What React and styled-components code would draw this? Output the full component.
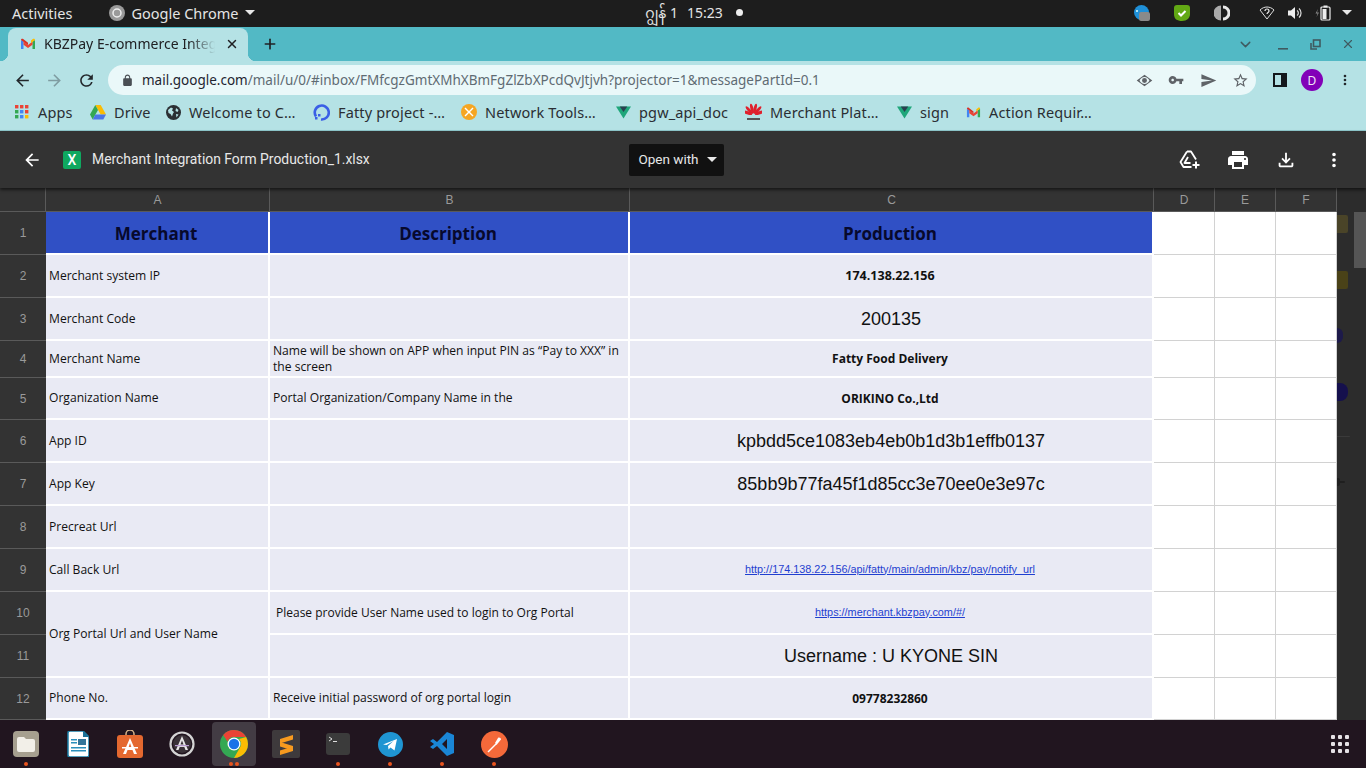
import React from 'react'
import styled, { createGlobalStyle } from 'styled-components'
import { ChevronDown, Plus, X } from 'lucide-react'

const GlobalStyle = createGlobalStyle`
  html, body { margin: 0; padding: 0; background: #333; overflow: hidden; }
  body { font-family: "Noto Sans", sans-serif; }
`

const Page = styled.div`
  width: 1366px;
  height: 768px;
  display: flex;
  flex-direction: column;
  overflow: hidden;
`

/* ---------- gnome top bar ---------- */
const TopBar = styled.div`
  height: 27px;
  flex: none;
  box-sizing: border-box;
  background: #1d1d1d;
  color: #e4e4e4;
  font-size: 14.5px;
  line-height: 20px;
  display: grid;
  grid-template-columns: 1fr auto 1fr;
  grid-template-rows: 25px;
  align-items: center;
  padding: 0 0 2px 12px;
`
const TopLeft = styled.div`
  display: flex;
  align-items: center;
`
const AppName = styled.div`
  margin-left: 37px;
  display: flex;
  align-items: center;
  gap: 6px;
`
const Caret = styled.span`
  width: 0;
  height: 0;
  margin-left: 1px;
  border-left: 5px solid transparent;
  border-right: 5px solid transparent;
  border-top: 5px solid #e8e8e8;
`
const Clock = styled.div`
  display: flex;
  align-items: center;
  gap: 9px;
  margin-left: 10px;
  font-size: 14px;
  font-family: "Noto Sans", "Noto Sans Myanmar", sans-serif;
`
const Dot = styled.span`
  width: 7px;
  height: 7px;
  border-radius: 50%;
  background: #eee;
  margin-left: 4px;
`
const Tray = styled.div`
  display: flex;
  justify-content: flex-end;
  align-items: center;
  padding-right: 12px;
`
const TraySlot = styled.div`
  width: ${p => p.$w}px;
  display: flex;
  justify-content: center;
  align-items: center;
`

/* ---------- chrome ---------- */
const TabStrip = styled.div`
  height: 34px;
  flex: none;
  background: #52b9c5;
  display: flex;
  align-items: flex-end;
  padding-left: 8px;
  color: #202124;
`
const Tab = styled.div`
  position: relative;
  width: 240px;
  height: 33px;
  background: #b5e2e5;
  border-radius: 8px 8px 0 0;
  display: flex;
  align-items: center;
  padding: 0 9px 2px 12px;
  box-sizing: border-box;
  gap: 8px;
  font-size: 14px;
  &::before, &::after {
    content: "";
    position: absolute;
    bottom: 0;
    width: 8px;
    height: 8px;
  }
  &::before { left: -8px; background: radial-gradient(circle at 0 0, transparent 8px, #b5e2e5 8.5px); }
  &::after { right: -8px; background: radial-gradient(circle at 100% 0, transparent 8px, #b5e2e5 8.5px); }
`
const TabTitle = styled.div`
  flex: 1;
  white-space: nowrap;
  overflow: hidden;
  -webkit-mask-image: linear-gradient(90deg, #000 84%, transparent 99%);
  mask-image: linear-gradient(90deg, #000 84%, transparent 99%);
`
const NewTab = styled.div`
  margin: 0 0 9px 14px;
  display: flex;
`
const WindowControls = styled.div`
  margin-left: auto;
  height: 34px;
  padding-right: 2px;
  display: flex;
  align-items: center;
  color: #3f5a60;
`
const WinButton = styled.div`
  width: ${p => p.$w}px;
  display: flex;
  justify-content: center;
`
const Toolbar = styled.div`
  height: 34px;
  flex: none;
  background: #b5e2e5;
  display: flex;
  align-items: center;
  padding-top: 4px;
  box-sizing: border-box;
`
const NavButton = styled.div`
  width: 32px;
  display: flex;
  justify-content: center;
  &:first-child { margin-left: 6px; }
`
const Omnibox = styled.div`
  width: 1148px;
  height: 30px;
  margin-left: 6px;
  border-radius: 15px;
  background: #eaf8f9;
  display: flex;
  align-items: center;
  padding-left: 13px;
  box-sizing: border-box;
  font-size: 13.5px;
  color: #5f6b73;
  white-space: nowrap;
`
const Host = styled.span`
  color: #1f2430;
`
const Url = styled.div`
  margin-left: 8px;
  flex: 1;
  padding-bottom: 1px;
`
const OmniIcon = styled.div`
  width: 32px;
  display: flex;
  justify-content: center;
`
const RightTools = styled.div`
  display: flex;
  align-items: center;
  margin-left: 9px;
`
const ToolSlot = styled.div`
  width: ${p => p.$w}px;
  display: flex;
  justify-content: center;
`
const Avatar = styled.div`
  width: 22px;
  height: 22px;
  border-radius: 50%;
  background: #8200b8;
  color: #f2e6f7;
  font-size: 12px;
  display: flex;
  align-items: center;
  justify-content: center;
`
const Bookmarks = styled.div`
  height: 35px;
  flex: none;
  background: #b5e2e5;
  border-bottom: 1px solid #8fc9cd;
  box-sizing: content-box;
  display: flex;
  align-items: center;
  padding-left: 15px;
  font-size: 14.5px;
  letter-spacing: 0.15px;
  color: #2a2e33;
`
const Bookmark = styled.div`
  width: ${p => p.$w}px;
  flex: none;
  display: flex;
  align-items: center;
  gap: 8px;
  white-space: nowrap;
  line-height: 18px;
  margin-bottom: 1px;
`

/* ---------- drive viewer ---------- */
const ViewerBar = styled.div`
  height: 57px;
  flex: none;
  background: #333;
  color: #e8e8e8;
  display: grid;
  grid-template-columns: 1fr auto 1fr;
  align-items: center;
  box-shadow: 0 2px 3px rgba(0, 0, 0, 0.55);
  position: relative;
  z-index: 1;
`
const ViewerLeft = styled.div`
  display: flex;
  align-items: center;
  padding-left: 22px;
`
const FileBadge = styled.div`
  width: 18px;
  height: 18px;
  margin-left: 21px;
  margin-right: 11px;
  border-radius: 2px;
  background: #0fa860;
  color: #fff;
  font: 500 14px "Roboto", sans-serif;
  display: flex;
  align-items: center;
  justify-content: center;
`
const FileName = styled.div`
  font: 13.9px "Roboto", sans-serif;
  margin-bottom: 1px;
`
const OpenWith = styled.div`
  width: 95px;
  height: 32px;
  margin-right: 14px;
  padding: 0 0 1px 3px;
  box-sizing: border-box;
  background: #111;
  border-radius: 2px;
  font: 13.5px "Roboto", sans-serif;
  display: flex;
  align-items: center;
  justify-content: center;
  gap: 7px;
`
const ViewerRight = styled.div`
  display: flex;
  justify-content: flex-end;
  align-items: center;
  padding-right: 8px;
`
const ViewerAction = styled.div`
  width: 48px;
  display: flex;
  justify-content: center;
`

const SheetArea = styled.div`
  flex: 1;
  min-height: 0;
  display: flex;
  background: #2c2c2c;
`
const Sheet = styled.div`
  width: 1337px;
  flex: none;
  display: grid;
  grid-template-columns: 46px 224px 360px 524px 61px 61px 61px;
  grid-template-rows: 24px 43px 43px 43px 37px 42px 43px 43px 43px 43px 43px 43px 42px;
`
const Corner = styled.div`
  background: #333;
  border-right: 1px solid #5a5a5a;
  border-bottom: 1px solid #5a5a5a;
`
const ColHead = styled.div`
  background: #333;
  color: #9a9a9a;
  font: 12px "Liberation Sans", sans-serif;
  display: flex;
  align-items: center;
  justify-content: center;
  border-right: 1px solid #5a5a5a;
  border-bottom: 1px solid #5a5a5a;
`
const RowHead = styled.div`
  background: #333;
  color: #9a9a9a;
  font: 12px "Liberation Sans", sans-serif;
  display: flex;
  align-items: center;
  justify-content: center;
  border-bottom: 1px solid #5a5a5a;
`
const Cell = styled.div`
  background: #e9eaf4;
  border-right: 2px solid #fff;
  border-bottom: 2px solid #fff;
  box-sizing: border-box;
  display: flex;
  align-items: center;
  padding: 0 3px;
  color: #111;
  font: 12.1px/16px "Open Sans", sans-serif;
  grid-row: ${p => (p.$span ? `span ${p.$span}` : 'auto')};
  ${p => p.$inset && 'padding-left: 6px; font-size: 12px;'}
`
const HeadCell = styled.div`
  background: #3050c5;
  border-right: 2px solid #fff;
  border-bottom: 2px solid #fff;
  box-sizing: border-box;
  display: flex;
  align-items: center;
  justify-content: center;
  padding: 1px 2px 0 0;
  color: #07092c;
  font: bold 17px "Open Sans", sans-serif;
`
const ValueCell = styled(Cell)`
  justify-content: center;
  padding: 0 2px 0 0;
  ${p => p.$kind === 'bold' && 'font: bold 12px "Open Sans", sans-serif;'}
  ${p => p.$kind === 'ip' && 'font: bold 12.5px "Open Sans", sans-serif;'}
  ${p => p.$kind === 'big' && 'font: 18px "Liberation Sans", sans-serif; padding: 2px 0 0 0;'}
  ${p => p.$kind === 'link' && 'font: 10.85px "Liberation Sans", sans-serif; color: #1f3fd0; text-decoration: underline; padding-bottom: 2px;'}
`
const EmptyCell = styled.div`
  background: #fff;
  border-right: 1px solid #d2d2d2;
  border-bottom: 1px solid #d2d2d2;
  box-sizing: border-box;
`
const Gutter = styled.div`
  flex: 1;
  position: relative;
  background: #2c2c2c;
`
const Thumb = styled.div`
  position: absolute;
  top: 24px;
  right: 0;
  width: 12px;
  height: 56px;
  background: #555;
`
/* the page behind the viewer shows through faintly */
const Ghost = styled.div`
  position: absolute;
  left: 0;
  top: ${p => p.$top}px;
  width: ${p => p.$w}px;
  height: ${p => p.$h}px;
  background: ${p => p.$bg};
  border-radius: 0 ${p => p.$r || 2}px ${p => p.$r || 2}px 0;
`

/* ---------- dock ---------- */
const Dock = styled.div`
  height: 48px;
  flex: none;
  background: #21151f;
  display: flex;
  align-items: center;
  position: relative;
`
const DockItem = styled.div`
  position: relative;
  width: 44px;
  height: 44px;
  margin: 0 4px;
  flex: none;
  display: flex;
  align-items: center;
  justify-content: center;
  border-radius: 4px;
  background: ${p => (p.$active ? '#433c44' : 'transparent')};
`
const Pips = styled.div`
  position: absolute;
  left: 0;
  right: 0;
  bottom: 0;
  display: flex;
  justify-content: center;
  gap: 2px;
`
const Pip = styled.span`
  width: 4px;
  height: 4px;
  border-radius: 50%;
  background: #e9541f;
`
const AppGrid = styled.div`
  margin-left: auto;
  margin-right: 17px;
  display: grid;
  grid-template-columns: repeat(3, 4px);
  gap: 3px;
`
const GridDot = styled.span`
  width: 4px;
  height: 4px;
  border-radius: 1px;
  background: #e6e2e6;
`

const Glyph = ({ d, size = 16, color = 'currentColor' }) => (
  <svg width={size} height={size} viewBox="0 0 24 24" fill={color}><path d={d} /></svg>
)

const paths = {
  back: 'M20 11H7.83l5.59-5.59L12 4l-8 8 8 8 1.41-1.41L7.83 13H20v-2z',
  forward: 'M4 11h12.17l-5.59-5.59L12 4l8 8-8 8-1.41-1.41L16.17 13H4v-2z',
  reload: 'M17.65 6.35A7.958 7.958 0 0012 4c-4.42 0-7.99 3.58-7.99 8s3.57 8 7.99 8c3.73 0 6.84-2.55 7.73-6h-2.08A5.99 5.99 0 0112 18c-3.31 0-6-2.69-6-6s2.69-6 6-6c1.66 0 3.14.69 4.22 1.78L13 11h7V4l-2.35 2.35z',
  lock: 'M18 8h-1V6c0-2.76-2.24-5-5-5S7 3.24 7 6v2H6c-1.1 0-2 .9-2 2v10c0 1.1.9 2 2 2h12c1.1 0 2-.9 2-2V10c0-1.1-.9-2-2-2zM9 6c0-1.66 1.34-3 3-3s3 1.34 3 3v2H9V6z',
  key: 'M12.65 10C11.83 7.67 9.61 6 7 6c-3.31 0-6 2.69-6 6s2.69 6 6 6c2.61 0 4.83-1.67 5.65-4H17v4h4v-4h2v-4H12.65zM7 14c-1.1 0-2-.9-2-2s.9-2 2-2 2 .9 2 2-.9 2-2 2z',
  send: 'M2.01 21L23 12 2.01 3 2 10l15 2-15 2z',
  star: 'M22 9.24l-7.19-.62L12 2 9.19 8.63 2 9.24l5.46 4.73L5.82 21 12 17.27 18.18 21l-1.63-7.03L22 9.24zM12 15.4l-3.76 2.27 1-4.28-3.32-2.88 4.38-.38L12 6.1l1.71 4.04 4.38.38-3.32 2.88 1 4.28L12 15.4z',
  print: 'M19 8H5c-1.66 0-3 1.34-3 3v6h4v4h12v-4h4v-6c0-1.66-1.34-3-3-3zm-3 11H8v-5h8v5zm3-7c-.55 0-1-.45-1-1s.45-1 1-1 1 .45 1 1-.45 1-1 1zm-1-9H6v4h12V3z',
  download: 'M18 15v3H6v-3H4v3c0 1.1.9 2 2 2h12c1.1 0 2-.9 2-2v-3h-2zm-1-4l-1.41-1.41L13 12.17V4h-2v8.17L8.41 9.59 7 11l5 5 5-5z',
  dots: 'M12 8a2 2 0 100-4 2 2 0 000 4zm0 2a2 2 0 100 4 2 2 0 000-4zm0 6a2 2 0 100 4 2 2 0 000-4z',
  eye: 'M12 4L1 12l11 8 11-8-11-8zm0 3c3 0 5.500 2 7 5-1.500 3-4 5-7 5s-5.500-2-7-5c1.500-3 4-5 7-5zm0 1.500a3.500 3.500 0 100 7 3.500 3.500 0 000-7z',
}

const GmailIcon = ({ size = 16 }) => (
  <svg width={size} height={size} viewBox="0 0 16 16" fill="none">
    <path d="M1 13V4l2.500 1.500V13z" fill="#4285f4" />
    <path d="M15 13V4l-2.500 1.500V13z" fill="#34a853" />
    <path d="M3.500 5.500v3.200L8 12l4.500-3.300V5.500L8 9z" fill="#ea4335" />
    <path d="M1 4c0-1.200 1.300-1.600 2.200-.9L8 6.800V9L1 4z" fill="#d93025" />
    <path d="M15 4c0-1.200-1.300-1.600-2.200-.9L11 4.500V7l4-3z" fill="#fbbc04" />
  </svg>
)
const AppsIcon = () => (
  <svg width="15" height="14" viewBox="0 0 15 14">
    {[0, 5, 10].flatMap((y, r) => [0, 5, 10].map((x, c) => (
      <rect key={`${r}${c}`} x={x} y={y} width="3.400" height="3.400"
        fill={[['#ea4335', '#ea4335', '#ea4335'], ['#34a853', '#4285f4', '#ea4335'], ['#34a853', '#4285f4', '#fbbc04']][r][c]} />
    )))}
  </svg>
)
const DriveIcon = () => (
  <svg width="16" height="15" viewBox="0 0 16 15">
    <path d="M5.300 0h5.400l5.300 9.500h-5.300z" fill="#fbbc04" />
    <path d="M5.300 0L0 9.500 2.700 14.500 8 5z" fill="#34a853" />
    <path d="M2.700 14.500h10.600L16 9.500H5.400z" fill="#4a76e8" />
  </svg>
)
const GlobeIcon = () => (
  <svg width="15" height="15" viewBox="0 0 15 15">
    <circle cx="7.500" cy="7.500" r="7.500" fill="#2b2f33" />
    <path d="M2 5l3-2.500 2 1-1 2 2 1.500-1 1.500-1 3-1.500-2.500L2.500 8zM10 3l2.500 2-1 2-2-1zM10 9l2.500.5-2 3z" fill="#b5e2e5" />
  </svg>
)
const FattyIcon = () => (
  <svg width="17" height="17" viewBox="0 0 17 17" fill="none">
    <path d="M3 12.500a7 7 0 115 3" stroke="#3b5fe6" strokeWidth="2.600" />
    <rect x="5" y="10" width="2.500" height="2.500" fill="#3b5fe6" />
    <rect x="2" y="13" width="2.500" height="2.500" fill="#3b5fe6" />
  </svg>
)
const NetworkIcon = () => (
  <svg width="16" height="16" viewBox="0 0 16 16">
    <circle cx="8" cy="8" r="8" fill="#f5a623" />
    <path d="M4.500 3.500L8 7l3.500-3.500 1 1L9 8l3.500 3.500-1 1L8 9l-3.500 3.500-1-1L7 8 3.500 4.500z" fill="#fff" />
  </svg>
)
const VIcon = () => (
  <svg width="15" height="13" viewBox="0 0 16 13">
    <path d="M0 0h16L8 13z" fill="#1fa67a" />
    <path d="M4 0h8L8 6z" fill="#2a4050" />
  </svg>
)
const HuaweiIcon = () => (
  <svg width="17" height="18" viewBox="0 0 17 18">
    {[-70, -42, -14, 14, 42, 70].map(a => (
      <ellipse key={a} cx="8.500" cy="5.500" rx="1.500" ry="5" fill="#e0202c" transform={`rotate(${a} 8.500 12)`} />
    ))}
    <rect x="2" y="15" width="13" height="2" fill="#555" />
  </svg>
)
const BlueDisk = () => (
  <svg width="16" height="16" viewBox="0 0 16 16">
    <circle cx="7.500" cy="7.500" r="7.500" fill="#1f90d8" />
    <rect x="5" y="7" width="11" height="9" rx="2" fill="#8a8a8a" />
    <circle cx="3" cy="6" r="1" fill="#dff" />
  </svg>
)
const GreenShield = () => (
  <svg width="16" height="16" viewBox="0 0 16 16">
    <path d="M3 0h10c2 0 3 1 3 3v6c0 4-3 7-8 7-5 0-8-2-8-7V3c0-2 1-3 3-3z" fill="#62a814" />
    <path d="M4.500 8L7 10.500 11.500 6" stroke="#fff" strokeWidth="2" fill="none" />
  </svg>
)
const HalfCircle = () => (
  <svg width="16" height="16" viewBox="0 0 16 16">
    <path d="M7 .5a7.500 7.500 0 000 15z" fill="#aaa" />
    <path d="M9 .5a7.500 7.500 0 010 15v-3a4.500 4.500 0 000-9z" fill="#e8e8e8" />
  </svg>
)
const WifiQ = () => (
  <svg width="16" height="14" viewBox="0 0 16 14" fill="none">
    <path d="M1 4c4-4 10-4 14 0l-7 9z" stroke="#ddd" strokeWidth="1" />
    <path d="M6 5a2 2 0 114 0c0 1.500-2 1.500-2 3" stroke="#eee" strokeWidth="1.200" />
  </svg>
)
const Volume = () => (
  <svg width="15" height="14" viewBox="0 0 15 14" fill="none">
    <path d="M0 4.500h3L7 1v12L3 9.500H0z" fill="#eee" />
    <path d="M9 4.500a3 3 0 010 5M11 2.500a6 6 0 010 9" stroke="#ddd" strokeWidth="1.200" />
  </svg>
)
const Battery = () => (
  <svg width="16" height="16" viewBox="0 0 16 16" fill="none">
    <path d="M3 4L.5 8.500h2L1.500 12 4 7.500H2z" fill="#8a8a8a" />
    <rect x="6" y="2" width="9" height="13" rx="1" stroke="#eee" strokeWidth="1.200" />
    <rect x="8.500" y=".5" width="4" height="2" fill="#eee" />
    <rect x="7.500" y="4" width="4" height="10" fill="#eee" />
  </svg>
)
const SidePanel = () => (
  <svg width="14" height="14" viewBox="0 0 14 14">
    <rect x="1" y="1" width="12" height="12" fill="none" stroke="#14181c" strokeWidth="2" />
    <rect x="8" y="1" width="5" height="12" fill="#14181c" />
  </svg>
)
const RestoreIcon = () => (
  <svg width="11" height="11" viewBox="0 0 11 11" fill="none" stroke="#3f5a60" strokeWidth="1.600">
    <rect x="3.500" y="1" width="6.500" height="6.500" />
    <path d="M1 4v6h6" />
  </svg>
)
const AddDrive = () => (
  <svg width="22" height="20" viewBox="0 0 22 20" fill="none" stroke="#fff" strokeWidth="1.800" strokeLinejoin="round">
    <path d="M8 1.500h4l5 8M8 1.500L1.500 12l3 5h8" />
    <path d="M9 7l-3.500 6h6" />
    <path d="M17 11.500v7M13.500 15h7" strokeWidth="2" />
  </svg>
)

const FilesDock = () => (
  <svg width="26" height="26" viewBox="0 0 26 26">
    <rect width="26" height="26" rx="4" fill="#a69f8f" />
    <path d="M4 8a2 2 0 012-2h5l2 2h7a2 2 0 012 2v9a2 2 0 01-2 2H6a2 2 0 01-2-2z" fill="#f2efe8" />
  </svg>
)
const WriterDock = () => (
  <svg width="22" height="26" viewBox="0 0 22 26">
    <path d="M1 2a2 2 0 012-2h13l6 6v18a2 2 0 01-2 2H3a2 2 0 01-2-2z" fill="#fff" stroke="#1b7fa8" strokeWidth="1.500" />
    <path d="M16 0l6 6h-6z" fill="#1b6f96" />
    <rect x="4" y="8" width="6" height="1.500" fill="#2a8fbc" />
    <rect x="4" y="11" width="6" height="1.500" fill="#2a8fbc" />
    <rect x="11" y="8" width="8" height="6" fill="#33759a" />
    <rect x="4" y="16" width="15" height="1.500" fill="#2a8fbc" />
    <rect x="4" y="19" width="15" height="1.500" fill="#2a8fbc" />
  </svg>
)
const StoreDock = () => (
  <svg width="26" height="28" viewBox="0 0 26 28">
    <path d="M9 6V4a4 4 0 018 0v2" fill="none" stroke="#d8b48a" strokeWidth="1.500" />
    <rect y="5" width="26" height="23" rx="3" fill="#e4682f" />
    <path d="M13 8l-7 16h3l1.500-4h5L17 24h3zM11.500 17.500L13 13l1.500 4.500z" fill="#fff" />
    <rect x="5" y="17" width="16" height="1.500" fill="#fff" />
  </svg>
)
const UpdateDock = () => (
  <svg width="26" height="26" viewBox="0 0 26 26" fill="none">
    <circle cx="13" cy="13" r="11.500" stroke="#d4d4d4" strokeWidth="2.200" />
    <circle cx="13" cy="13" r="9" fill="#3a3238" />
    <path d="M13 5l-6 14h2.500l1.200-3h4.600l1.200 3H19zM11.500 13.500L13 9.500l1.500 4z" fill="#e8e8e8" />
    <rect x="6" y="14" width="14" height="1.200" fill="#b79ad0" />
  </svg>
)
const ChromeDock = () => (
  <svg width="28" height="28" viewBox="0 0 28 28">
    <circle cx="14" cy="14" r="14" fill="#34a853" />
    <path d="M14 0a14 14 0 0112.100 7H14a7 7 0 00-6.500 4.400L3.200 5A14 14 0 0114 0z" fill="#ea4335" />
    <path d="M26.100 7A14 14 0 0114 28l6-10.500A7 7 0 0019 9z" fill="#fbbc04" />
    <circle cx="14" cy="14" r="6.500" fill="#fff" />
    <circle cx="14" cy="14" r="5.200" fill="#1a73e8" />
  </svg>
)
const SublimeDock = () => (
  <svg width="28" height="28" viewBox="0 0 28 28">
    <rect width="28" height="28" rx="2" fill="#3e3a3c" />
    <path d="M21 5v4.500L8 13.500V9zM8 12l13 4v4.500l-13-4zM21 16.500V21L8 25v-4.500z" fill="#f79a1f" />
  </svg>
)
const TerminalDock = () => (
  <svg width="24" height="22" viewBox="0 0 24 22">
    <rect width="24" height="22" rx="3" fill="#3b3b3b" />
    <path d="M3 4l3 2-3 2" stroke="#ddd" fill="none" />
    <rect x="7" y="8" width="4" height="1" fill="#ddd" />
  </svg>
)
const TelegramDock = () => (
  <svg width="25" height="25" viewBox="0 0 25 25">
    <circle cx="12.500" cy="12.500" r="12.500" fill="#1f95d2" />
    <path d="M5 12.500l14-5.500-2.500 11.500-4-3-2 2-.5-3.500 5.500-5-7 4z" fill="#fff" />
  </svg>
)
const VscodeDock = () => (
  <svg width="24" height="24" viewBox="0 0 24 24">
    <path d="M17 0l7 3v18l-7 3-10-10-4 3-3-2 4-3-4-3 3-2 4 3zM17 7l-5 5 5 5z" fill="#1a86d6" />
  </svg>
)
const PostmanDock = () => (
  <svg width="27" height="27" viewBox="0 0 27 27" fill="none">
    <circle cx="13.500" cy="13.500" r="13.500" fill="#f4693a" />
    <path d="M7 21l8-8" stroke="#fff" strokeWidth="1.400" />
    <path d="M14 12l3-5c1-1 3 0 3 1.500L15.500 14z" fill="#fff" />
  </svg>
)

const bookmarks = [
  { w: 75, icon: <AppsIcon />, label: 'Apps' },
  { w: 76, icon: <DriveIcon />, label: 'Drive' },
  { w: 147, icon: <GlobeIcon />, label: 'Welcome to C…' },
  { w: 148, icon: <FattyIcon />, label: 'Fatty project -…' },
  { w: 155, icon: <NetworkIcon />, label: 'Network Tools…' },
  { w: 129, icon: <VIcon />, label: 'pgw_api_doc' },
  { w: 152, icon: <HuaweiIcon />, label: 'Merchant Plat…' },
  { w: 69, icon: <VIcon />, label: 'sign' },
  { w: 160, icon: <GmailIcon size={15} />, label: 'Action Requir…' },
]

const rows = [
  { n: 2, a: 'Merchant system IP', c: '174.138.22.156', kind: 'ip' },
  { n: 3, a: 'Merchant Code', c: '200135', kind: 'big' },
  { n: 4, a: 'Merchant Name', b: 'Name will be shown on APP when input PIN as “Pay to XXX” in the screen', c: 'Fatty Food Delivery', kind: 'bold' },
  { n: 5, a: 'Organization Name', b: 'Portal Organization/Company Name in the', c: 'ORIKINO Co.,Ltd', kind: 'bold' },
  { n: 6, a: 'App ID', c: 'kpbdd5ce1083eb4eb0b1d3b1effb0137', kind: 'big' },
  { n: 7, a: 'App Key', c: '85bb9b77fa45f1d85cc3e70ee0e3e97c', kind: 'big' },
  { n: 8, a: 'Precreat Url', c: '', kind: 'bold' },
  { n: 9, a: 'Call Back Url', c: 'http://174.138.22.156/api/fatty/main/admin/kbz/pay/notify_url', kind: 'link' },
  { n: 10, a: 'Org Portal Url and User Name', span: 2, b: 'Please provide User Name used to login to Org Portal', inset: true, c: 'https://merchant.kbzpay.com/#/', kind: 'link' },
  { n: 11, c: 'Username : U KYONE SIN', kind: 'big' },
  { n: 12, a: 'Phone No.', b: 'Receive initial password of org portal login', c: '09778232860', kind: 'bold' },
]

const dock = [
  { icon: <FilesDock />, pips: 1 },
  { icon: <WriterDock /> },
  { icon: <StoreDock /> },
  { icon: <UpdateDock /> },
  { icon: <ChromeDock />, pips: 2, active: true },
  { icon: <SublimeDock /> },
  { icon: <TerminalDock />, pips: 1 },
  { icon: <TelegramDock />, pips: 1 },
  { icon: <VscodeDock />, pips: 1 },
  { icon: <PostmanDock />, pips: 1 },
]

export default function App() {
  return (
    <Page>
      <GlobalStyle />
      <TopBar>
        <TopLeft>
          Activities
          <AppName>
            <svg width="16" height="16" viewBox="0 0 16 16">
              <circle cx="8" cy="8" r="8" fill="#9a9a9a" />
              <circle cx="8" cy="8" r="4" fill="none" stroke="#eee" strokeWidth="1.500" />
            </svg>
            Google Chrome
            <Caret />
          </AppName>
        </TopLeft>
        <Clock>
          <span>ဂျွန် 1</span>
          <span>15:23</span>
          <Dot />
        </Clock>
        <Tray>
          <TraySlot $w={60}><BlueDisk /></TraySlot>
          <TraySlot $w={20}><GreenShield /></TraySlot>
          <TraySlot $w={60}><HalfCircle /></TraySlot>
          <TraySlot $w={30}><WifiQ /></TraySlot>
          <TraySlot $w={26}><Volume /></TraySlot>
          <TraySlot $w={30}><Battery /></TraySlot>
          <TraySlot $w={16}><Caret /></TraySlot>
        </Tray>
      </TopBar>

      <TabStrip>
        <Tab>
          <GmailIcon />
          <TabTitle>KBZPay E-commerce Integration</TabTitle>
          <X size={14} strokeWidth={2.500} />
        </Tab>
        <NewTab><Plus size={16} strokeWidth={2.500} /></NewTab>
        <WindowControls>
          <WinButton $w={46}><ChevronDown size={17} /></WinButton>
          <WinButton $w={30}><svg width="11" height="11" viewBox="0 0 11 11"><rect y="9" width="10" height="1.600" fill="#3f5a60" /></svg></WinButton>
          <WinButton $w={34}><RestoreIcon /></WinButton>
          <WinButton $w={32}><X size={14} strokeWidth={2} /></WinButton>
        </WindowControls>
      </TabStrip>

      <Toolbar>
        <NavButton><Glyph d={paths.back} size={19} color="#22272b" /></NavButton>
        <NavButton><Glyph d={paths.forward} size={19} color="#7f9ca1" /></NavButton>
        <NavButton><Glyph d={paths.reload} size={19} color="#22272b" /></NavButton>
        <Omnibox>
          <Glyph d={paths.lock} size={13} color="#4a4f55" />
          <Url><Host>mail.google.com</Host>/mail/u/0/#inbox/FMfcgzGmtXMhXBmFgZlZbXPcdQvJtjvh?projector=1&amp;messagePartId=0.1</Url>
          <OmniIcon><Glyph d={paths.eye} size={17} color="#5f6368" /></OmniIcon>
          <OmniIcon><Glyph d={paths.key} size={16} color="#5f6368" /></OmniIcon>
          <OmniIcon><Glyph d={paths.send} size={17} color="#5f6368" /></OmniIcon>
          <OmniIcon><Glyph d={paths.star} size={17} color="#5f6368" /></OmniIcon>
        </Omnibox>
        <RightTools>
          <ToolSlot $w={30}><SidePanel /></ToolSlot>
          <ToolSlot $w={34}><Avatar>D</Avatar></ToolSlot>
          <ToolSlot $w={32}><Glyph d={paths.dots} size={16} color="#22272b" /></ToolSlot>
        </RightTools>
      </Toolbar>

      <Bookmarks>
        {bookmarks.map(b => (
          <Bookmark key={b.label} $w={b.w}>{b.icon}{b.label}</Bookmark>
        ))}
      </Bookmarks>

      <ViewerBar>
        <ViewerLeft>
          <Glyph d={paths.back} size={20} color="#fff" />
          <FileBadge>X</FileBadge>
          <FileName>Merchant Integration Form Production_1.xlsx</FileName>
        </ViewerLeft>
        <OpenWith>Open with <Caret /></OpenWith>
        <ViewerRight>
          <ViewerAction><AddDrive /></ViewerAction>
          <ViewerAction><Glyph d={paths.print} size={24} color="#fff" /></ViewerAction>
          <ViewerAction><Glyph d={paths.download} size={22} color="#fff" /></ViewerAction>
          <ViewerAction><Glyph d={paths.dots} size={22} color="#fff" /></ViewerAction>
        </ViewerRight>
      </ViewerBar>

      <SheetArea>
        <Sheet>
          <Corner />
          {['A', 'B', 'C', 'D', 'E', 'F'].map(c => <ColHead key={c}>{c}</ColHead>)}

          <RowHead>1</RowHead>
          <HeadCell>Merchant</HeadCell>
          <HeadCell>Description</HeadCell>
          <HeadCell>Production</HeadCell>
          <EmptyCell /><EmptyCell /><EmptyCell />

          {rows.map(r => (
            <React.Fragment key={r.n}>
              <RowHead>{r.n}</RowHead>
              {r.a && <Cell $span={r.span}>{r.a}</Cell>}
              <Cell $inset={r.inset}>{r.b}</Cell>
              <ValueCell $kind={r.kind}>{r.c}</ValueCell>
              <EmptyCell /><EmptyCell /><EmptyCell />
            </React.Fragment>
          ))}
        </Sheet>
        <Gutter>
          <Thumb />
          <Ghost $top={27} $w={11} $h={18} $bg="#4a4428" />
          <Ghost $top={83} $w={11} $h={18} $bg="#4a4218" />
          <Ghost $top={140} $w={6} $h={15} $bg="#1d1a4a" $r={6} />
          <Ghost $top={195} $w={11} $h={18} $bg="#15104d" $r={8} />
          <Ghost $top={248} $w={13} $h={1} $bg="#3a3a3a" />
          <Ghost $top={293} $w={8} $h={2} $bg="#1f1f1f" />
          <Ghost $top={290} $w={3} $h={8} $bg="#1f1f1f" />
        </Gutter>
      </SheetArea>

      <Dock>
        {dock.map((d, i) => (
          <DockItem key={i} $active={d.active}>
            {d.icon}
            {d.pips && <Pips>{Array.from({ length: d.pips }, (_, k) => <Pip key={k} />)}</Pips>}
          </DockItem>
        ))}
        <AppGrid>
          {Array.from({ length: 9 }, (_, i) => <GridDot key={i} />)}
        </AppGrid>
      </Dock>
    </Page>
  )
}
